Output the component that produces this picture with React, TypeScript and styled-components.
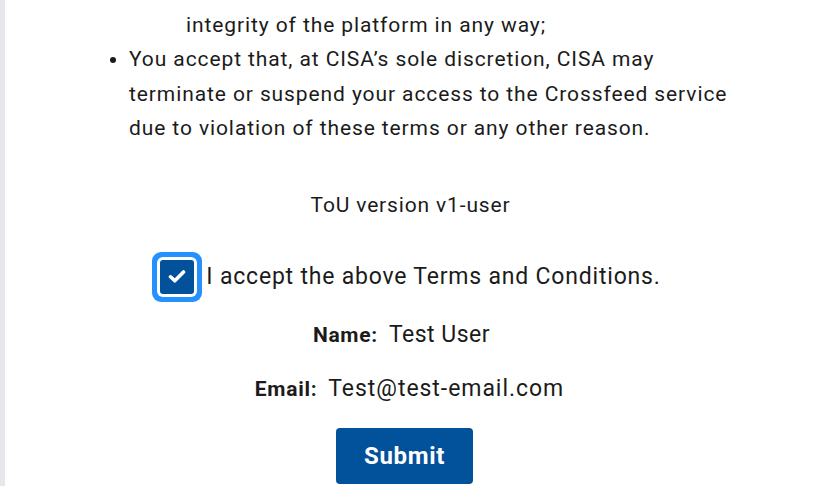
import React from "react";
import styled, { createGlobalStyle } from "styled-components";

const Global = createGlobalStyle`
  html, body { margin: 0; padding: 0; background: #ffffff; }
  body { font-family: Roboto, "Liberation Sans", Arial, sans-serif; color: #1b1b1b; }
`;

const Page = styled.div`
  display: flex;
  width: 816px;
  height: 486px;
  overflow: hidden;
`;

const SideRail = styled.div`
  width: 5px;
  flex: none;
  background: #e6e6ec;
`;

const Main = styled.main`
  flex: 1;
  display: flex;
  flex-direction: column;
  align-items: center;
`;

const Terms = styled.div`
  width: 643px;
  font-size: 21px;
  letter-spacing: 0.9px;
  line-height: 34.4px;
  color: #1b1b1b;
`;

const Continuation = styled.p`
  margin: 8px 0 0;
  padding-left: 97px;
`;

const List = styled.ul`
  margin: 0;
  padding-left: 40px;
`;

const Version = styled.p`
  margin: 42px 0 0;
  font-size: 21px;
  letter-spacing: 0.85px;
  line-height: 34px;
`;

const CheckRow = styled.label`
  display: flex;
  align-items: center;
  margin-top: 38px;
  height: 34px;
  font-size: 23px;
  letter-spacing: 0.8px;
  line-height: 30px;
  cursor: pointer;
`;

const Tile = styled.span`
  width: 34px;
  height: 34px;
  margin-right: 12px;
  border-radius: 3px;
  background: #02519b;
  box-shadow: 0 0 0 3px #ffffff, 0 0 0 8px #2491ff;
  display: flex;
  align-items: center;
  justify-content: center;
`;

const Field = styled.div<{ $top: number; $offset: number }>`
  display: flex;
  align-items: baseline;
  gap: 11px;
  height: 30px;
  line-height: 30px;
  margin-top: ${(p) => p.$top}px;
  margin-right: ${(p) => p.$offset}px;
`;

const FieldLabel = styled.span`
  font-weight: 700;
  font-size: 21px;
  letter-spacing: 0.7px;
`;

const FieldValue = styled.span<{ $spacing: number }>`
  font-size: 23px;
  letter-spacing: ${(p) => p.$spacing}px;
`;

const SubmitButton = styled.button`
  margin: 24px 12px 0 0;
  width: 137px;
  height: 56px;
  border: none;
  border-radius: 4px;
  background: #02519b;
  color: #ffffff;
  font-family: Roboto, "Liberation Sans", Arial, sans-serif;
  font-weight: 700;
  font-size: 24px;
  letter-spacing: 0.7px;
  cursor: pointer;
`;

export default function App() {
  return (
    <>
      <Global />
      <Page>
        <SideRail />
        <Main>
          <Terms>
            <Continuation>integrity of the platform in any way;</Continuation>
            <List>
              <li>
                You accept that, at CISA’s sole discretion, CISA may terminate or suspend your
                access to the Crossfeed service due to violation of these terms or any other
                reason.
              </li>
            </List>
          </Terms>
          <Version>ToU version v1-user</Version>
          <CheckRow>
            <Tile>
              <svg width="18" height="15" viewBox="0 0 18 15">
                <path d="M2.5 7.8l4.3 4L15.5 3" fill="none" stroke="#fff" strokeWidth="3.6" strokeLinecap="round" strokeLinejoin="round" />
              </svg>
            </Tile>
            I accept the above Terms and Conditions.
          </CheckRow>
          <Field $top={26} $offset={18}>
            <FieldLabel>Name:</FieldLabel>
            <FieldValue $spacing={0.5}>Test User</FieldValue>
          </Field>
          <Field $top={24} $offset={2}>
            <FieldLabel>Email:</FieldLabel>
            <FieldValue $spacing={0.95}>Test@test-email.com</FieldValue>
          </Field>
          <SubmitButton type="button">Submit</SubmitButton>
        </Main>
      </Page>
    </>
  );
}
